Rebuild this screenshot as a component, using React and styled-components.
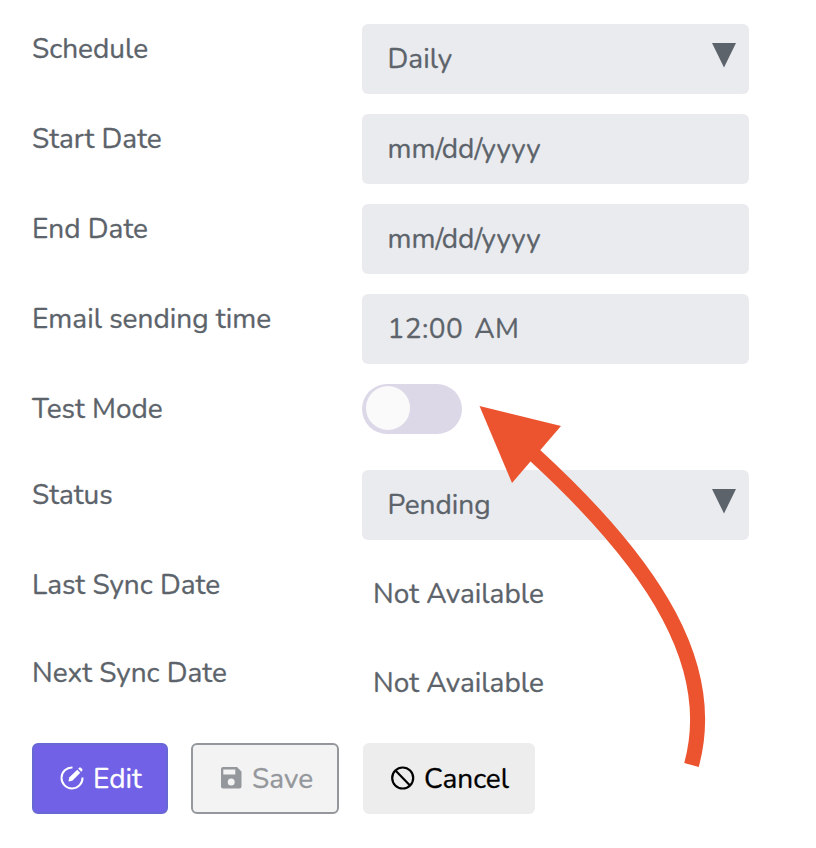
import React from 'react';
import styled, { createGlobalStyle } from 'styled-components';

const GlobalStyle = createGlobalStyle`
  * { box-sizing: border-box; }
  body { margin: 0; background: #fff; }
`;

const Page = styled.main`
  position: relative;
  width: 816px;
  height: 848px;
  padding: 24px 0 0 32px;
  overflow: hidden;
  background: #fff;
  color: #5c636a;
  font-family: Nunito, Lato, sans-serif;
  font-size: 28px;
  line-height: 34px;
  -webkit-text-stroke: 0.3px currentColor;
`;

const Row = styled.div`
  display: grid;
  grid-template-columns: 330px 387px;
  align-items: start;
  height: ${(p) => p.$height || 90}px;
`;

const Label = styled.label`
  padding-top: 8px;
  white-space: nowrap;
`;

const Text = styled.span`
  letter-spacing: ${(p) => p.$track || 0}px;
  word-spacing: ${(p) => p.$gap || 0}px;
  white-space: nowrap;
`;

const Field = styled.div`
  display: flex;
  justify-content: space-between;
  height: 70px;
  padding: 18px 13px 0 25.6px;
  border-radius: 6px;
  background: #eaebef;
`;

const Caret = styled.svg`
  width: 24px;
  height: 25px;
  margin-top: 1px;
  fill: #5c636a;
`;

const Value = styled.div`
  padding: ${(p) => p.$top}px 0 0 11px;
`;

const Toggle = styled.div`
  width: 100px;
  height: 50px;
  padding: 2px 4px;
  border-radius: 25px;
  background: #dcd8e8;
`;

const Knob = styled.div`
  width: 44px;
  height: 44px;
  border-radius: 50%;
  background: #fafafa;
`;

const Actions = styled.div`
  display: flex;
  padding-top: 5px;
`;

const Button = styled.button`
  display: flex;
  align-items: center;
  width: ${(p) => p.$width}px;
  height: 71px;
  margin: 0 ${(p) => p.$after || 0}px 0 0;
  padding: 0 0 0 ${(p) => p.$inset}px;
  border: 2px solid ${(p) => p.$border};
  border-radius: 6px;
  background: ${(p) => p.$fill};
  color: ${(p) => p.$ink};
  font: inherit;
`;

const Icon = styled.svg`
  flex: none;
  width: 24px;
  height: 24px;
  margin: 0 9px 2px 0;
`;

const Arrow = styled.svg`
  position: absolute;
  inset: 0;
  width: 816px;
  height: 848px;
  pointer-events: none;
`;

const rows = [
  { label: 'Schedule', value: 'Daily', select: true },
  { label: 'Start Date', value: 'mm/dd/yyyy' },
  { label: 'End Date', value: 'mm/dd/yyyy' },
  { label: 'Email sending time', value: '12:00 AM', valueTrack: 0.4, gap: 3.5 },
  { label: 'Test Mode', toggle: true, height: 86 },
  { label: 'Status', value: 'Pending', select: true },
  { label: 'Last Sync Date', value: 'Not Available', plain: 17, height: 88 },
  { label: 'Next Sync Date', value: 'Not Available', plain: 18 },
];

function Control({ row }) {
  if (row.toggle) return <Toggle><Knob /></Toggle>;
  const text = <Text $track={row.valueTrack} $gap={row.gap}>{row.value}</Text>;
  if (row.plain) return <Value $top={row.plain}>{text}</Value>;
  return (
    <Field>
      {text}
      {row.select && <Caret viewBox="0 0 24 25"><path d="M0 0h24L12 24.500z" /></Caret>}
    </Field>
  );
}

export default function App() {
  return (
    <Page>
      <GlobalStyle />
      {rows.map((row) => (
        <Row key={row.label} $height={row.height}>
          <Label>{row.label}</Label>
          <Control row={row} />
        </Row>
      ))}
      <Actions>
        <Button $width={136} $after={23} $inset={26} $border="#6768d3" $fill="#7161e6" $ink="#fff">
          <Icon viewBox="0 0 24 24" fill="none" stroke="currentColor">
            <path d="M12.500 1.500A10.500 10.500 0 1 0 22.500 11.500" strokeWidth="2" />
            <path d="M8.500 15.500l.7-4 8-7.800 3.100 3.100-8 8z" fill="currentColor" stroke="none" />
            <path d="M18.200 2.700l1-1q.8-.7 1.600 0l1.400 1.400q.7.800 0 1.600l-1 1z" fill="currentColor" stroke="none" />
          </Icon>
          <Text>Edit</Text>
        </Button>
        <Button $width={148} $after={24} $inset={26} $border="#94979b" $fill="#f3f3f3" $ink="#94979b">
          <Icon viewBox="0 0 24 24">
            <path fill="currentColor" fillRule="evenodd" d="M4 1h14l4.500 4.500v15q0 2-2 2H4q-2 0-2-2V3q0-2 2-2zM4.300 3.500v5h12v-5zM12.200 12.500a3.500 3.500 0 1 0 0 7 3.500 3.500 0 0 0 0-7z" />
          </Icon>
          <Text>Save</Text>
        </Button>
        <Button $width={172} $inset={26} $border="#ededed" $fill="#ededed" $ink="#000">
          <Icon viewBox="0 0 24 24" fill="none" stroke="currentColor" strokeWidth="2.200">
            <circle cx="11.700" cy="12" r="10.500" />
            <path d="M4.500 4.500l14.500 15" />
          </Icon>
          <Text>Cancel</Text>
        </Button>
      </Actions>
      <Arrow viewBox="0 0 816 848">
        <path d="M533.500 454C658 568 718 668 691.500 765" fill="none" stroke="#eb542e" strokeWidth="15" />
        <path d="M479.500 406L561 426 512 483z" fill="#eb542e" />
      </Arrow>
    </Page>
  );
}
